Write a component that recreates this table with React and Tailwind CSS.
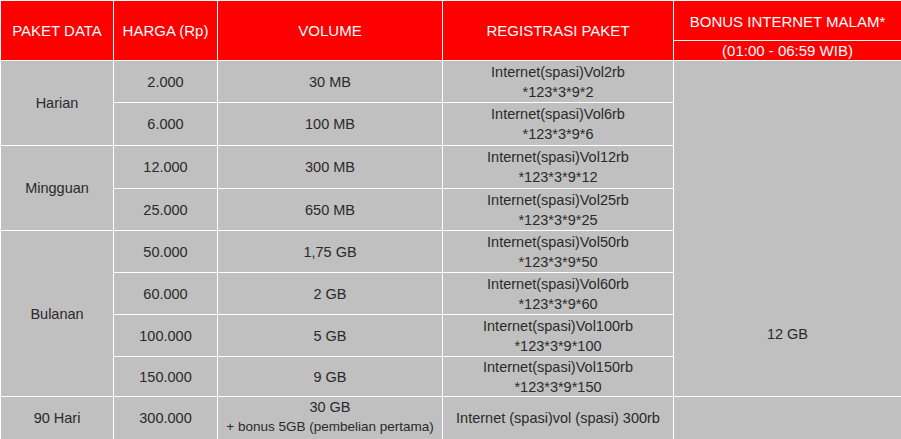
import React from "react";

const H = ({ children, className = "" }) => (
  <div className={"bg-[#ff0000] text-white flex items-center justify-center text-center text-[15px] leading-[19px] " + className}>
    {children}
  </div>
);

const C = ({ children, className = "" }) => (
  <div className={"bg-[#c0c0c0] text-[#2a2a2a] flex flex-col items-center justify-center text-center text-[14.5px] leading-[20px] " + className}>
    {children}
  </div>
);

const rows = [
  { price: "2.000", vol: "30 MB", code: "2" },
  { price: "6.000", vol: "100 MB", code: "6" },
  { price: "12.000", vol: "300 MB", code: "12" },
  { price: "25.000", vol: "650 MB", code: "25" },
  { price: "50.000", vol: "1,75 GB", code: "50" },
  { price: "60.000", vol: "2 GB", code: "60" },
  { price: "100.000", vol: "5 GB", code: "100" },
  { price: "150.000", vol: "9 GB", code: "150" },
];

export default function App() {
  const groups = { 0: ["Harian", "row-span-2"], 2: ["Mingguan", "row-span-2"], 4: ["Bulanan", "row-span-4"] };
  return (
    <div
      className="w-[901px] h-[439px] bg-white pl-px pt-px overflow-hidden"
      style={{ fontFamily: '"Liberation Sans", Arial, sans-serif' }}
    >
      <div className="grid gap-px grid-cols-[112px_103px_224px_230px_227px] grid-rows-[39px_19px_41px_42px_42px_41px_41px_41px_41px_39px_42px]">
        <H className="row-span-2">PAKET DATA</H>
        <H className="row-span-2">HARGA (Rp)</H>
        <H className="row-span-2">VOLUME</H>
        <H className="row-span-2">REGISTRASI PAKET</H>
        <H className="pt-px">BONUS INTERNET MALAM*</H>
        <H>(01:00 - 06:59 WIB)</H>
        {rows.map((r, i) => (
          <React.Fragment key={i}>
            {groups[i] && <C className={groups[i][1]}>{groups[i][0]}</C>}
            <C>{r.price}</C>
            <C>{r.vol}</C>
            <C>
              <span>Internet(spasi)Vol{r.code}rb</span>
              <span>*123*3*9*{r.code}</span>
            </C>
            {i === 0 && (
              <C className="row-span-8 !justify-end pb-[52px]">12 GB</C>
            )}
          </React.Fragment>
        ))}
        <C>90 Hari</C>
        <C>300.000</C>
        <C className="!justify-start pt-[1px]">
          <span className="leading-[19px]">30 GB</span>
          <span className="text-[13.5px] leading-[20px] whitespace-nowrap">+ bonus 5GB (pembelian pertama)</span>
        </C>
        <C>Internet (spasi)vol (spasi) 300rb</C>
        <C></C>
      </div>
    </div>
  );
}
